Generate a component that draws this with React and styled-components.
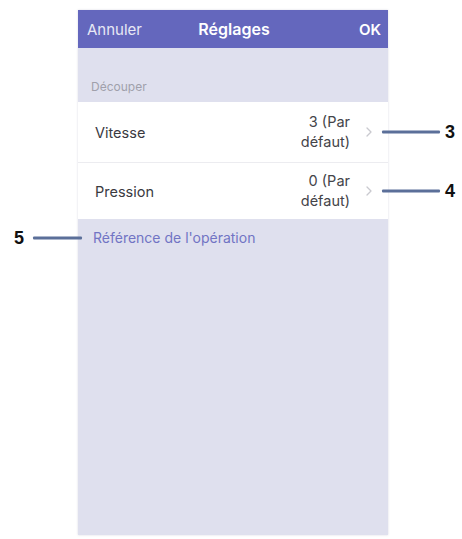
import React from 'react';
import styled, { createGlobalStyle } from 'styled-components';

const GlobalStyle = createGlobalStyle`
    html, body {
        margin: 0;
        padding: 0;
        background: #ffffff;
        font-family: Inter, "Noto Sans", "Liberation Sans", sans-serif;
    }
`;

const Page = styled.div`
    width: 462px;
    height: 539px;
    padding: 10px 0 4px 78px;
    box-sizing: border-box;
    position: relative;
`;

const Screen = styled.div`
    width: 310px;
    height: 525px;
    background: #dfe0ee;
    display: flex;
    flex-direction: column;
    box-shadow: 0 0 2px rgba(150, 150, 170, 0.35);
`;

const NavBar = styled.div`
    height: 38px;
    background: #6467bd;
    display: grid;
    grid-template-columns: 1fr auto 1fr;
    align-items: center;
    padding: 0 7px 0 9px;
    color: #ffffff;
    font-size: 15px;
`;

const NavButton = styled.span`
    justify-self: ${props => (props.right ? 'end' : 'start')};
    font-weight: ${props => (props.right ? 600 : 400)};
    opacity: ${props => (props.right ? 1 : 0.85)};
`;

const NavTitle = styled.span`
    font-weight: 600;
    font-size: 16px;
`;

const SectionHeader = styled.div`
    padding: 32px 0 0 13px;
    height: 22px;
    box-sizing: content-box;
    font-size: 12px;
    line-height: 14px;
    color: #a0a0ab;
`;

const Group = styled.div`
    background: #ffffff;
`;

const Row = styled.div`
    position: relative;
    height: ${props => props.height}px;
    display: flex;
    align-items: center;
    padding: 0 16px 0 17px;
    border-top: ${props => (props.first ? 'none' : '1px solid #ececf0')};
`;

const Label = styled.span`
    flex: 1;
    font-size: 14.5px;
    color: #3a3a3f;
`;

const Value = styled.span`
    text-align: right;
    font-size: 14.5px;
    line-height: 20px;
    color: #444449;
    margin-right: 16px;
`;

const Chevron = styled.svg`
    width: 6px;
    height: 10px;
`;

const Footer = styled.div`
    position: relative;
    padding: 10px 0 0 15px;
    font-size: 14px;
    color: #7174c4;
`;

const Callout = styled.div`
    position: absolute;
    top: 50%;
    transform: translateY(-50%);
    display: flex;
    align-items: center;
    gap: ${props => props.gap}px;
    left: ${props => props.left}px;
    flex-direction: ${props => (props.reverse ? 'row-reverse' : 'row')};
`;

const CalloutLine = styled.span`
    display: block;
    width: ${props => props.width}px;
    height: 3px;
    background: #5b6f99;
    border-radius: 1px;
`;

const CalloutNumber = styled.span`
    font-family: "Liberation Sans", Arial, sans-serif;
    font-weight: 700;
    font-size: 18px;
    color: #111111;
`;

const ChevronIcon = () => (
    <Chevron viewBox="0 0 6 10">
        <path d="M1 1 L5 5 L1 9" fill="none" stroke="#c9c9cf" strokeWidth="1.3" strokeLinecap="round" strokeLinejoin="round" />
    </Chevron>
);

const settings = [
    { id: 'speed', label: 'Vitesse', value: '3 (Par', note: 'défaut)', callout: '3', height: 60 },
    { id: 'pressure', label: 'Pression', value: '0 (Par', note: 'défaut)', callout: '4', height: 56 },
];

export default function App() {
    return (
        <Page>
            <GlobalStyle />
            <Screen>
                <NavBar>
                    <NavButton>Annuler</NavButton>
                    <NavTitle>Réglages</NavTitle>
                    <NavButton right>OK</NavButton>
                </NavBar>
                <SectionHeader>Découper</SectionHeader>
                <Group>
                    {settings.map((s, idx) => (
                        <Row key={s.id} first={idx === 0} height={s.height}>
                            <Label>{s.label}</Label>
                            <Value>{s.value}<br />{s.note}</Value>
                            <ChevronIcon />
                            <Callout left={304} gap={5}>
                                <CalloutLine width={58} />
                                <CalloutNumber>{s.callout}</CalloutNumber>
                            </Callout>
                        </Row>
                    ))}
                </Group>
                <Footer>
                    Référence de l'opération
                    <Callout left={-64} gap={9} reverse style={{ top: 'calc(50% + 5px)' }}>
                        <CalloutLine width={49} />
                        <CalloutNumber>5</CalloutNumber>
                    </Callout>
                </Footer>
            </Screen>
        </Page>
    );
}
